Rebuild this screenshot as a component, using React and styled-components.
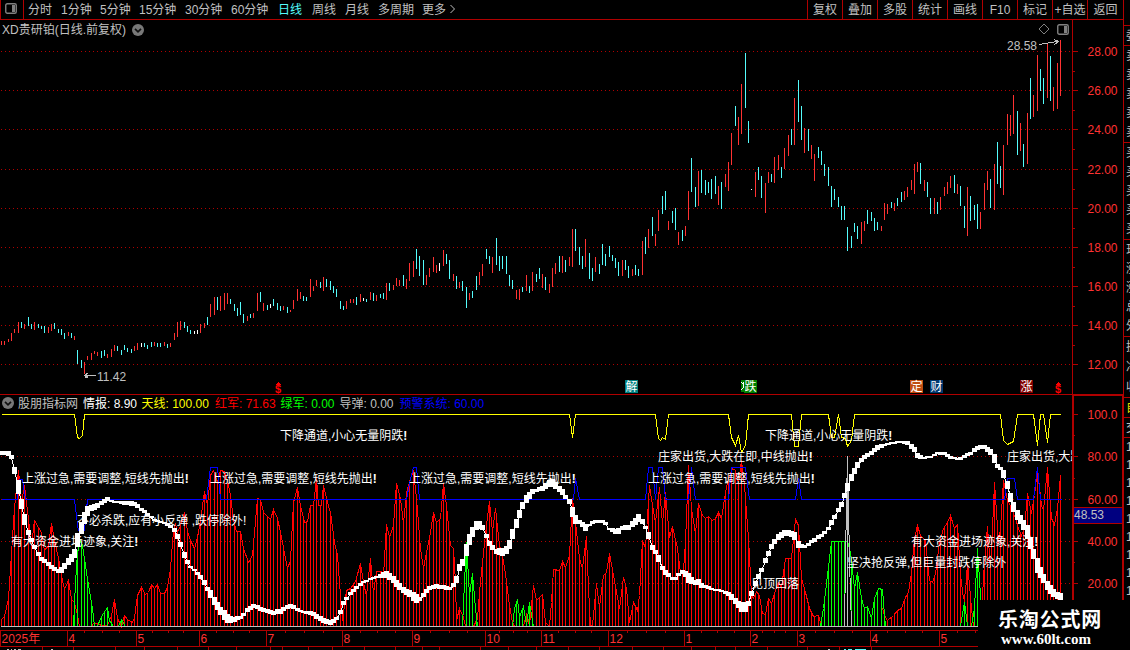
import styled, { createGlobalStyle } from "styled-components";

const RED_LINE = "#b00000";
const UP = "#ff3232";
const DOWN = "#54fcfc";
const SILVER = "#c0c0c0";
const FONT = `"Liberation Sans", "Noto Sans CJK SC", sans-serif`;

const periods = [
  { label: "分时", width: 33 },
  { label: "1分钟", width: 39 },
  { label: "5分钟", width: 39 },
  { label: "15分钟", width: 46 },
  { label: "30分钟", width: 46 },
  { label: "60分钟", width: 47 },
  { label: "日线", width: 34, active: true },
  { label: "周线", width: 33 },
  { label: "月线", width: 33 },
  { label: "多周期", width: 44 },
  { label: "更多", width: 27 },
];

const tools = ["复权", "叠加", "多股", "统计", "画线", "F10", "标记", "+自选", "返回"];

const values = [
  { label: "股朋指标网", color: SILVER, width: 65 },
  { label: "情报: 8.90", color: "#ffffff", width: 58.5 },
  { label: "天线: 100.00", color: "#ffff00", width: 73.5 },
  { label: "红军: 71.63", color: "#ff0000", width: 65.5 },
  { label: "绿军: 0.00", color: "#00ff00", width: 59 },
  { label: "导弹: 0.00", color: SILVER, width: 60 },
  { label: "预警系统: 60.00", color: "#0000ff", width: 100 },
];

// x, high, low, colour (r = up, c = down, w = flat)
const candles = `
1 341 345 r;4 341 345 r;8 339 342 r;11 333 341 r;14 329 333 r;18 322 333 r;21 322 328 c;24 324 329 r;28 317 326 c;31 324 329 c;
34 322 330 r;38 324 328 c;41 326 329 c;44 326 333 c;48 327 333 r;51 324 331 r;54 323 329 c;58 329 333 c;61 329 335 c;64 333 339 c;
68 332 336 r;71 333 338 c;74 336 340 r;77 350 364 c;81 360 368 c;84 362 374 r;87 356 360 r;91 353 360 r;94 351 354 r;97 352 356 r;
101 351 358 c;104 350 356 c;107 354 358 r;111 349 357 r;114 345 351 r;117 346 351 c;121 350 355 c;124 345 350 c;127 348 352 c;131 349 353 c;
134 346 351 r;137 343 350 r;141 343 347 w;144 343 347 c;147 345 349 c;151 342 347 c;154 342 346 r;157 343 347 c;160 343 347 c;164 342 346 r;
167 344 348 c;170 343 347 r;174 333 340 r;177 322 337 r;180 321 330 r;184 322 328 c;187 326 332 c;190 330 334 c;194 331 334 w;197 330 334 w;
200 324 333 r;204 323 328 r;207 317 325 c;210 304 317 r;214 297 315 r;217 297 310 c;220 296 311 r;224 293 310 r;227 293 304 r;230 299 304 c;
234 304 311 c;237 308 316 c;240 302 315 c;243 314 323 c;247 316 321 r;250 314 318 c;253 313 318 r;257 293 311 r;260 292 302 c;263 303 311 r;
267 305 310 c;270 304 308 w;273 299 306 c;277 303 310 c;280 306 311 c;283 306 310 r;287 307 313 c;290 310 312 r;293 300 309 r;297 289 301 r;
300 292 299 r;303 296 301 c;306 297 301 c;310 279 297 r;313 286 291 r;316 280 286 r;320 282 288 c;323 277 291 r;326 279 287 c;330 281 290 c;
333 286 293 c;336 289 297 c;340 301 309 c;343 306 310 c;346 301 309 r;350 299 303 r;353 299 303 r;356 297 305 c;360 294 302 r;363 298 301 w;
366 299 302 c;370 292 300 r;373 293 301 c;376 295 301 r;380 294 298 c;383 293 299 c;386 283 300 r;389 283 291 c;393 285 290 r;396 278 286 r;
399 280 286 r;403 275 286 c;406 279 289 r;409 263 281 r;413 261 277 r;416 249 269 c;419 256 276 c;423 260 285 c;426 275 285 r;429 268 277 r;
433 257 272 r;436 265 273 r;439 263 271 w;443 250 266 r;446 254 264 c;449 260 279 c;453 274 281 r;456 276 289 c;459 282 288 r;462 281 291 c;
466 287 308 c;469 293 300 r;472 291 298 c;476 276 290 c;479 272 285 r;482 264 276 r;486 249 259 c;489 256 264 c;492 257 273 r;496 238 265 c;
499 256 271 c;502 256 269 c;506 256 274 c;509 275 286 c;512 280 289 c;516 290 299 r;519 289 300 r;522 287 292 c;526 275 291 r;529 286 293 c;
532 272 291 r;536 274 282 c;539 268 279 c;542 274 288 r;545 277 290 c;549 284 293 r;552 268 287 r;555 263 274 r;559 256 272 c;562 256 273 r;
565 260 272 c;569 257 266 r;572 229 267 r;575 229 251 c;579 247 265 c;582 256 269 c;585 239 267 r;589 253 279 c;592 268 281 c;595 257 272 r;
599 264 274 c;602 244 265 c;605 254 266 c;609 246 257 c;612 255 261 c;615 258 268 c;618 262 276 c;622 260 276 r;625 260 270 c;628 266 278 c;
632 269 276 r;635 265 275 c;638 269 276 c;642 241 275 r;645 237 254 c;648 229 248 r;652 217 236 c;655 234 246 r;658 210 231 r;662 196 214 c;
665 191 210 c;668 221 230 r;672 211 223 c;675 208 230 c;678 232 245 r;682 230 241 c;685 226 236 r;688 191 220 r;691 158 192 c;695 187 207 c;
698 171 206 r;701 170 193 c;705 180 195 c;708 182 193 c;711 179 199 c;715 176 194 c;718 186 205 r;721 182 209 c;725 174 187 r;728 162 191 r;
731 133 165 r;735 106 126 c;738 117 145 r;741 84 134 r;745 53 108 c;748 121 143 c;751 189 190 w;755 172 197 r;758 167 180 c;761 176 198 c;
765 183 213 r;768 172 183 r;771 174 182 c;774 157 183 r;778 155 170 r;781 167 178 c;784 148 169 r;788 135 156 r;791 129 145 c;794 98 145 r;
798 80 122 c;801 106 140 c;804 128 153 r;808 129 151 c;811 145 159 r;814 154 181 r;818 147 158 c;821 151 165 c;824 164 176 c;828 167 186 c;
831 186 207 c;834 189 200 c;838 197 207 c;841 206 220 c;844 206 220 c;847 227 251 c;851 236 248 c;854 223 232 c;857 226 239 c;861 222 244 r;
864 221 231 r;867 210 224 c;871 212 221 c;874 218 231 c;877 222 230 c;881 226 231 r;884 203 220 r;887 204 214 r;891 202 208 c;894 203 211 r;
897 198 206 c;901 192 202 c;904 191 200 r;907 187 197 r;911 180 190 r;914 164 194 r;917 162 172 r;920 163 184 c;924 180 191 r;927 182 197 c;
930 198 214 c;934 198 214 r;937 202 214 c;940 197 210 r;944 187 196 r;947 182 194 r;950 176 188 r;954 175 193 c;957 184 194 r;960 186 206 c;
964 206 228 c;967 187 236 r;970 196 221 c;974 205 220 c;977 204 229 c;980 212 229 r;984 183 210 r;987 171 190 r;990 179 208 c;994 164 210 r;
997 142 184 c;1000 166 188 c;1003 145 195 r;1007 114 145 r;1010 115 136 r;1013 95 134 r;1017 111 155 c;1020 123 151 r;1023 144 167 c;1027 113 164 r;
1030 78 119 c;1033 95 117 r;1037 55 111 r;1040 69 91 c;1043 78 104 c;1047 43 98 r;1050 56 101 c;1053 87 111 r;1057 63 109 r;1060 40 96 r`
  .split(";")
  .map((row) => {
    const [x, high, low, tone] = row.trim().split(" ");
    return { x: +x, high: +high, low: +low, tone };
  });

const toneColors = { r: UP, c: DOWN, w: "#ffffff" };

const parse = (text) => text.trim().split(/\s+/).map((pair) => pair.split(",").map(Number));

const redArmy = [
  `1,619 4,616 8,598 11,553 14,507 18,470 21,503 24,485 28,519 31,545 34,520 38,527 41,532 44,550 48,545 51,523 54,540 58,558 61,575 64,589 68,580 71,599 74,602 77,615 79,626`,
  `91,626 93,623 97,623 101,625 107,625 111,615 114,599 117,618 121,626 124,615 127,619 132,622 134,617 137,595 141,587 145,594 148,592 151,584 154,588 157,584 160,593 164,593 167,587 170,568 173,530 175,523 177,532 180,525 184,512 187,531 190,540 194,548 197,537 200,520 204,491 207,505 210,475 213,470 217,482 220,470 224,471 227,480 230,495 233,520 236,531 240,531 243,548 248,562 252,555 257,498 260,499 263,512 270,519 273,509 277,518 280,532 287,568 290,560 293,502 297,487 300,505 304,522 307,521 310,505 313,505 316,478 318,505 321,505 323,485 327,502 330,512 334,542 337,555 340,595 342,620 346,590 350,588 355,581 360,563 364,587 366,595 370,558 373,593 376,571 381,571 383,575 386,524 389,537 393,525 396,483 400,498 403,523 406,492 410,478 413,470 416,498 420,548 423,568 426,552 430,532 433,512 436,522 440,518 443,483 446,505 450,545 453,548 455,582 456,620 459,608 463,617 465,626`,
  `473,626 477,618 479,592 482,562 486,525 489,501 492,532 495,508 499,545 502,555 505,573 508,598 512,622 514,626`,
  `523,626 526,613 529,625 533,585 536,600 542,594 545,622 549,626 551,602 553,569 559,570 562,561 565,567 569,555 572,498 575,522 579,558 582,568 586,536 588,588 590,625 592,625 596,583 599,607 603,575 606,572 609,553 613,575 619,608 623,577 626,588 629,622 633,602 637,610 639,595 642,540 645,548 649,485 652,505 655,522 659,487 662,523 665,492 669,537 672,526 677,548 680,572 683,570 685,542 688,465 691,508 695,533 698,503 702,515 705,518 708,516 712,520 715,518 718,512 721,518 725,492 728,478 732,468 735,470 738,483 741,460 744,485 748,538 751,595 753,598 756,591 759,595 762,613 765,614 768,598 771,603 775,590 778,582 781,587 785,558 791,558 795,519 798,525 801,578 805,592 809,608 813,616 818,615 821,626`,
  `882,608 884,615 887,620 893,615 897,610 901,608 905,597 908,592 911,572 914,538 917,525 920,535 925,540 929,580 932,582 935,573 939,542 943,528 947,522 950,515 954,528 957,524 960,575 963,598 965,592 967,562 971,608 973,626`,
  `980,626 982,595 984,562 987,526 990,568 992,528 994,482 998,542 1000,528 1003,480 1007,500 1010,505 1015,518 1018,528 1021,535 1024,528 1027,493 1031,513 1034,495 1037,468 1041,505 1043,510 1047,467 1051,518 1054,524 1057,508 1060,475`,
].map(parse);

const greenArmy = [
  `73,626 75,582 77,552 80,540 82,545 85,565 88,585 92,608 94,626`,
  `97,626 100,618 103,613 107,607 109,621 111,622 112,626`,
  `118,626 121,619 125,626`,
  `462,626 464,582 466,542 469,595 472,573 475,608 477,626`,
  `512,626 514,608 517,599 519,617 523,606 526,625 529,602 533,626`,
  `820,626 823,608 827,575 831,541 847,541 850,552 854,588 857,572 861,598 864,608 867,606 871,618 874,598 878,588 882,589 884,615 885,626`,
  `960,626 964,602 967,625`,
  `971,626 974,608 977,548 980,595 981,626`,
].map(parse);

const warning = parse(`1,499 17,499 19,479 22,479 25,499 74,499 77,524 78,530 84,530 87,499 206,499 210,467 217,467 220,499 406,499 410,478 413,467 416,467 419,499 573,499 575,478 579,499 645,499 648,467 652,467 655,499 658,467 662,467 665,499 688,499 691,467 695,499 728,499 731,467 745,467 749,499 795,499 798,478 801,499 1004,499 1007,478 1014,478 1017,499 1033,499 1037,467 1040,499 1061,499`);

const sky = parse(`1,414 74,414 77,437 79,438 82,435 84,414 569,414 572,437 575,414 655,414 658,438 660,440 662,437 665,439 668,414 728,414 731,437 735,445 738,435 741,452 745,445 748,414 791,414 794,446 798,446 801,414 828,414 831,437 834,437 838,414 841,437 845,438 847,446 851,440 854,414 1000,414 1003,440 1007,444 1013,441 1017,414 1033,414 1037,445 1040,414 1043,414 1047,442 1050,414 1060,414`);

// x, centre, thickness of the sentiment ribbon
const ribbon = parse(`
1,452.5,4 8,453,5 11,457,4 14,470,7 18,487,14 21,504,10 24,519,11 28,532,5 31,540,4 34,547,4 38,554,4 41,559,4 44,561,4 48,564,4 51,567,4 54,569,4 58,571,4
61,570,6 64,566,6 68,561,7 71,558,8 74,553,9 77,540,14 81,528,12 84,518,12 87,511,10 91,508,6 97,505,5 101,503,4 107,499,4 111,501,2 117,502,2 124,503,4
131,503,5 136,505,4 141,509,3 147,514,3 154,520,2 164,523,2 170,526,3 174,530,4 177,536,5 180,544,5 184,555,6 187,562,4 190,567,2 194,570,2 200,577,4
204,582,5 207,589,4 210,594,8 214,601,8 217,606,8 220,611,8 224,615,10 228,619,8 234,619,5 240,617,3 247,610,4 254,605,4 260,609,4 273,612.7,4 280,611,5
285,608,4 291,605.5,4 295,608,3 303,612,2 311,613,4 317,617,5 323,620,5 329,622.7,5 335,620,3 340,612,4 343,603,4 347,597,3 355,588,3 365,581,2 375,577,2
386,574,7 392,578,7 398,586,7 403,590,6 408,593,6 415,598,10 420,599,3 423,595,4 428,588,4 435,586,4 442,587,4 450,589,3 454,584,4 457,577,8 459,567,7
463,561,7 466,550,12 469,539,11 473,530,10 477,524,8 481,526,7 484,531,2 487,539,5 491,547,5 496,551,5 502,552,8 507,550,8 510,541,9 513,530,10 517,521,9
520,510,8 523,503,7 527,498,8 531,492,5 537,490,3 543,488,5 547,484,7 553,483,8 558,488,6 562,492,6 566,498,3 570,503,5 572,512,10 575,519,9 580,523,3
586,528,8 588,526,2 593,522,3 600,521,3 605,523,3 608,528,2 613,531,4 617,532,6 622,528,4 628,527,5 633,523,6 638,518,8 642,521,5 645,527,3 649,538,8
652,547,5 655,552,4 659,560,8 662,568,4 666,574,5 672,578,3 677,578,3 678,574,3 683,572,4 688,578,10 693,582,5 698,582,6 702,586,4 712,589,2 722,591,2
728,594,4 732,598,6 737,603,6 740,606,10 744,608,11 748,603,5 751,593,5 755,583,5 758,576,5 762,568,3 766,558,5 769,551,5 772,544,5 776,538,5 780,536,6
785,532,6 790,533,6 795,537,8 798,544,7 802,547,3 808,544,3 815,539,4 822,535,3 828,528,3 831,522,5 835,515,4 838,510,4 842,502,5 844,495,5 847,487,8
851,477,7 854,471,6 857,465,6 861,460,4 865,456,4 872,452,4 878,447,5 885,445,2 892,443,2 900,442,2 907,443,4 913,448,5 917,455,5 923,458,2 930,457,2
937,453,2 943,453,3 950,457,3 957,459,2 963,457,3 970,453,3 977,448,4 982,446,4 987,449,5 992,454,6 994,458,9 997,466,4 1000,468,3 1003,474,8 1007,485,8
1010,497,9 1013,507,10 1017,515,10 1022,523,9 1027,532,14 1030,543,12 1033,554,10 1037,565,15 1041,575,9 1045,582,8 1048,587,9 1053,593,8 1060,596.5,7`);

const signals = [
  { x: 280, y: 435, text: "下降通道,小心无量阴跌", mark: true },
  { x: 765, y: 435, text: "下降通道,小心无量阴跌", mark: true },
  { x: 658, y: 456, text: "庄家出货,大跌在即,中线抛出", mark: true },
  { x: 1007, y: 456, text: "庄家出货,大跌" },
  { x: 22, y: 478, text: "上涨过急,需要调整,短线先抛出", mark: true },
  { x: 210, y: 478, text: "上涨过急,需要调整,短线先抛出", mark: true },
  { x: 409, y: 478, text: "上涨过急,需要调整,短线先抛出", mark: true },
  { x: 648, y: 478, text: "上涨过急,需要调整,短线先抛出", mark: true },
  { x: 77, y: 520, text: "不必杀跌,应有小反弹 ,跌停除外!" },
  { x: 11, y: 541, text: "有大资金进场迹象,关注", mark: true },
  { x: 911, y: 541, text: "有大资金进场迹象,关注", mark: true },
  { x: 847, y: 562, text: "坚决抢反弹,但巨量封跌停除外" },
  { x: 751, y: 583, text: "见顶回落" },
];

const badges = [
  { x: 625, text: "解", color: "#008080" },
  { x: 744, text: "跌", color: "#008000" },
  { x: 910, text: "定", color: "#c04c10" },
  { x: 930, text: "财", color: "#003870" },
  { x: 1020, text: "涨", color: "#800000" },
];

const months = [
  [0, "2025年"], [67, "4"], [136, "5"], [199, "6"], [266, "7"], [342, "8"], [412, "9"], [485, "10"],
  [541, "11"], [608, "12"], [684, "1"], [750, "2"], [797, "3"], [870, "4"], [939, "5"], [1010, ""],
];

const lowerTicks = [42, 73, 115, 144, 177, 208, 236, 270, 282, 308, 332, 364, 395, 422, 439, 480, 508, 536, 568, 599, 632, 663, 691, 715, 735, 767, 807, 839, 871];

const priceLevels = [[51, "28.00"], [90, "26.00"], [129, "24.00"], [169, "22.00"], [208, "20.00"], [247, "18.00"], [286, "16.00"], [325, "14.00"], [364, "12.00"]];
const valueLevels = [[414, "100.0"], [456, "80.00"], [499, "60.00"], [541, "40.00"], [583, "20.00"]];

const quoteGroups = [
  { height: 26, rows: [] },
  { height: 20, rows: ["委比"] },
  { height: 97, rows: ["卖五", "卖四", "卖三", "卖二", "卖一"] },
  { height: 97, rows: ["买一", "买二", "买三", "买四", "买五"] },
  { height: 97, rows: ["现价", "涨跌", "涨幅", "总量", "外盘"] },
  { height: 61, rows: ["换手", "净资", "收益"] },
  { height: 20, rows: ["自选"], color: "#e0e000" },
  { height: 20, rows: ["交易"] },
  { height: 163, rows: ["14:56", "14:56", "14:56", "14:56", "14:56", "14:56", "14:56", "14:57", "15:00"] },
];

const interpolate = (points, x, column = 1) => {
  for (let i = 1; i < points.length; i++) {
    if (x <= points[i][0]) {
      const a = points[i - 1];
      const b = points[i];
      return a[column] + ((b[column] - a[column]) * (x - a[0])) / (b[0] - a[0]);
    }
  }
  return points[points.length - 1][column];
};

const toPath = (points) => "M" + points.map(([x, y]) => `${x + 0.5} ${y + 0.5}`).join("L");

const stems = (points) =>
  candles
    .filter(({ x }) => x >= points[0][0] && x <= points[points.length - 1][0])
    .map(({ x }) => `M${x + 0.5} ${Math.round(interpolate(points, x))}V626`)
    .join("");

function PanelIcon() {
  return (
    <svg width="12" height="11" viewBox="0 0 12 11">
      <rect x="0.75" y="0.75" width="10.5" height="9.5" rx="1.5" fill="none" stroke="#808080" strokeWidth="1.4" />
      <rect x="7" y="2" width="3" height="7" fill="#808080" />
    </svg>
  );
}

function CollapseIcon() {
  return (
    <svg width="12" height="12" viewBox="0 0 12 12">
      <circle cx="6" cy="6" r="6" fill="#787878" />
      <path d="M3 4.8l3 3 3-3" fill="none" stroke="#101010" strokeWidth="1.7" />
    </svg>
  );
}

function Grid({ levels }) {
  return levels.map(([y]) => (
    <path key={y} d={`M1 ${y + 0.5}H1072`} stroke={RED_LINE} strokeDasharray="1 3" />
  ));
}

function DollarMark({ x }) {
  return (
    <g>
      <path d={`M${x} 384.5l2.5-2.5 2.5 2.5z`} fill="#ff0000" />
      <DollarText x={x - 1} y={393}>$</DollarText>
    </g>
  );
}

function PriceChart() {
  return (
    <ChartSvg width="1072" height="374" viewBox="0 20 1072 374">
      <Grid levels={priceLevels} />
      {["r", "c", "w"].map((tone) => (
        <path
          key={tone}
          stroke={toneColors[tone]}
          d={candles
            .filter((candle) => candle.tone === tone)
            .map(({ x, high, low }) => `M${x + 0.5} ${high}V${low}`)
            .join("")}
        />
      ))}
      <path d="M84.5 375.5H96M84.5 375.5l4-3M84.5 375.5l4 3M85 375h2v2h-2z" stroke={SILVER} fill="none" />
      <ChartText x="97" y="381" $color={SILVER}>11.42</ChartText>
      <path d="M1039.5 44.5l20-3.5M1059 41.5l-5-2M1059 41.5l-5 3" stroke={SILVER} fill="none" />
      <ChartText x="1007" y="50" $color={SILVER}>28.58</ChartText>
      {badges.map(({ x, text, color }) => (
        <g key={text}>
          <path d={`M${x} 380h12l1 1v12h-13z`} fill={color} />
          <ChartText x={x + 0.5} y="391" $color="#ffffff">{text}</ChartText>
        </g>
      ))}
      <path d="M741 380h4v12h-4z" fill="#008000" />
      <path d="M741.5 382l2 3M743.5 382v5l-2 3" stroke="#ffffff" fill="none" />
      <DollarMark x={276} />
      <DollarMark x={1056} />
    </ChartSvg>
  );
}

function IndicatorChart() {
  return (
    <ChartSvg width="1072" height="218" viewBox="0 412 1072 218">
      <Grid levels={valueLevels.slice(1)} />
      <g fill="none">
        {redArmy.map((points, i) => (
          <path key={i} d={toPath(points) + stems(points)} stroke="#ff0000" />
        ))}
        {greenArmy.map((points, i) => (
          <path key={i} d={toPath(points) + stems(points)} stroke="#00ff00" />
        ))}
        <path d={toPath(warning)} stroke="#0000ff" />
        <path d="M844.5 626L846.5 500 847.5 456V626M847.5 456L849.5 560 851.5 626" stroke={SILVER} />
        <path d={toPath(sky)} stroke="#ffff00" />
        <path d={toPath(ribbon)} stroke="#ffffff" />
      </g>
      {signals.map(({ x, y, text, mark }) => (
        <ChartText key={`${x}-${y}`} x={x} y={y + 5} $color="#ffffff">
          {text}
          {mark && <tspan fontWeight="bold">!</tspan>}
        </ChartText>
      ))}
      {candles.map(({ x }) => {
        const height = Math.round(interpolate(ribbon, x, 2));
        return (
          <rect
            key={x}
            x={x - 2}
            y={Math.round(interpolate(ribbon, x) - height / 2)}
            width="5"
            height={height}
            fill="#ffffff"
          />
        );
      })}
      <path d="M1 626.5H1072" stroke={SILVER} />
    </ChartSvg>
  );
}

function Axis({ levels, top, height, thick, marker }) {
  const ticks = levels.slice(0, -1).map(([y], i) => Math.round((y + levels[i + 1][0]) / 2));
  return (
    <ChartSvg width="52" height={height} viewBox={`1072 ${top} 52 ${height}`}>
      <path d={`M${thick ? 1073 : 1072.5} ${top}V${top + height}`} stroke={RED_LINE} strokeWidth={thick ? 2 : 1} />
      {levels.map(([y, label]) => (
        <g key={label}>
          <path d={`M1073 ${y + 0.5}h5`} stroke={RED_LINE} />
          <ChartText x="1087.5" y={y + 5} $color={UP}>{label}</ChartText>
        </g>
      ))}
      {ticks.map((y) => <path key={y} d={`M1073 ${y + 0.5}h2`} stroke={RED_LINE} />)}
      {marker && (
        <g>
          <rect x="1074" y="507" width="48" height="17" fill="#000080" />
          <path d="M1074 507.5H1122M1074 523.5H1122" stroke={RED_LINE} />
          <ChartText x="1074" y="519" $color={SILVER}>{marker}</ChartText>
        </g>
      )}
      <path d={`M${thick ? 1123 : 1123.5} ${top}V${top + height}`} stroke={RED_LINE} strokeWidth={thick ? 2 : 1} />
      {thick && <path d={`M1072 ${top + 1}H1124`} stroke={RED_LINE} strokeWidth="2" />}
    </ChartSvg>
  );
}

function TimeAxis() {
  const minor = months.slice(0, -1).flatMap(([x], i) => {
    const step = (months[i + 1][0] - x) / 4;
    return i === 0 ? [] : [1, 2, 3].map((n) => Math.round(x + step * n));
  });
  return (
    <ChartSvg width="1124" height="20" viewBox="0 630 1124 20">
      <path
        stroke={RED_LINE}
        d={
          "M0 630.5H1124M0 646.5H1124" +
          months.map(([x]) => `M${x + 0.5} 630V646`).join("") +
          minor.map((x) => `M${x + 0.5} 630v3`).join("") +
          lowerTicks.map((x) => `M${x + 0.5} 646v4`).join("")
        }
      />
      {months.map(([x, label]) => (
        <ChartText key={x} x={x + 1.5} y="643" $color={UP}>{label}</ChartText>
      ))}
      <path d="M7 649.5h2m2 0h1m2 0h2m2 0h3M51 649.5h2M828 649.5h2" stroke={SILVER} />
      <path d="M844 649.5h2m2 0h4m3 0h11" stroke={DOWN} strokeWidth="2" />
    </ChartSvg>
  );
}

export default function App() {
  return (
    <>
      <GlobalStyle />
      <Terminal>
        <Main>
          <Toolbar>
            <IconCell><PanelIcon /></IconCell>
            <Periods>
              {periods.map(({ label, width, active }) => (
                <Period key={label} $width={width} $active={active}>{label}</Period>
              ))}
              <MoreArrow width="8" height="10" viewBox="0 0 8 10">
                <path d="M1.5 1l4 4-4 4" fill="none" stroke={SILVER} />
              </MoreArrow>
            </Periods>
            {tools.map((tool) => <Tool key={tool}>{tool}</Tool>)}
          </Toolbar>
          <PricePanel>
            <PriceChart />
            <Axis levels={priceLevels} top={20} height={374} />
            <StockTitle>
              XD贵研铂(日线.前复权)
              <CollapseIcon />
            </StockTitle>
            <ChartTools>
              <svg width="12" height="12" viewBox="0 0 12 12">
                <path d="M6 1l5 5-5 5-5-5z" fill="none" stroke="#808080" />
              </svg>
              <PanelIcon />
            </ChartTools>
          </PricePanel>
          <IndicatorPanel>
            <Plot>
              <ValueBar>
                <CollapseIcon />
                {values.map(({ label, color, width }) => (
                  <Value key={label} $color={color} $width={width}>{label}</Value>
                ))}
              </ValueBar>
              <IndicatorChart />
            </Plot>
            <Axis levels={valueLevels} top={394} height={236} thick marker="48.53" />
          </IndicatorPanel>
          <TimeAxis />
        </Main>
        <Quotes>
          {quoteGroups.map(({ height, rows, color }, i) => (
            <QuoteGroup key={i} $height={height} $color={color}>
              {rows.map((row, n) => <Quote key={n}>{row}</Quote>)}
            </QuoteGroup>
          ))}
        </Quotes>
        <SiteMark>
          <SiteName>乐淘公式网</SiteName>
          <SiteUrl>www.60lt.com</SiteUrl>
        </SiteMark>
      </Terminal>
    </>
  );
}

const GlobalStyle = createGlobalStyle`
  body {
    margin: 0;
    background: #000000;
    overflow: hidden;
  }
`;

const Terminal = styled.div`
  position: relative;
  display: flex;
  width: 1130px;
  height: 650px;
  overflow: hidden;
  background: #000000;
  color: ${SILVER};
  font-family: ${FONT};
  font-size: 12px;
`;

const Main = styled.div`
  display: flex;
  flex-direction: column;
  width: 1124px;
  flex: none;
`;

const Toolbar = styled.div`
  box-sizing: border-box;
  display: flex;
  height: 20px;
  border-bottom: 1px solid ${RED_LINE};
  border-right: 1px solid ${RED_LINE};
  line-height: 18px;
  white-space: nowrap;
`;

const IconCell = styled.div`
  box-sizing: border-box;
  width: 24px;
  padding: 3px 0 0 4px;
  border: solid ${RED_LINE};
  border-width: 0 1px;
  line-height: 0;
`;

const Periods = styled.div`
  display: flex;
  align-items: flex-start;
  flex: 1;
  padding: 1px 0 0 4px;
`;

const Period = styled.div`
  width: ${({ $width }) => $width}px;
  color: ${({ $active }) => ($active ? DOWN : SILVER)};
`;

const MoreArrow = styled.svg`
  margin-top: 3px;
`;

const Tool = styled.div`
  box-sizing: border-box;
  width: 35px;
  border-left: 1px solid ${RED_LINE};
  padding-top: 1px;
  text-align: center;

  &:last-child {
    width: 36px;
  }
`;

const ChartSvg = styled.svg`
  display: block;
  flex: none;
  shape-rendering: crispEdges;
`;

const ChartText = styled.text`
  fill: ${({ $color }) => $color};
  font-family: ${FONT};
  font-size: 12px;
  white-space: pre;
`;

const DollarText = styled.text`
  fill: #ff0000;
  font-family: ${FONT};
  font-size: 11px;
  font-weight: bold;
`;

const PricePanel = styled.div`
  position: relative;
  display: flex;
  height: 374px;
`;

const StockTitle = styled.div`
  position: absolute;
  top: 2px;
  left: 2px;
  display: flex;
  align-items: center;
  gap: 6px;
  line-height: 17px;

  svg {
    margin-bottom: 2px;
  }
`;

const ChartTools = styled.div`
  position: absolute;
  top: 3px;
  right: 55px;
  display: flex;
  align-items: center;
  gap: 7px;
`;

const IndicatorPanel = styled.div`
  display: flex;
  height: 236px;
`;

const Plot = styled.div`
  width: 1072px;
`;

const ValueBar = styled.div`
  box-sizing: border-box;
  display: flex;
  align-items: flex-start;
  height: 18px;
  padding: 1px 0 0 2px;
  border-top: 1px solid ${RED_LINE};
  line-height: 16px;
  white-space: nowrap;

  svg {
    margin: 1px 4px 0 0;
  }
`;

const Value = styled.div`
  width: ${({ $width }) => $width}px;
  color: ${({ $color }) => $color};
`;

const Quotes = styled.div`
  width: 6px;
  overflow: hidden;
`;

const QuoteGroup = styled.div`
  box-sizing: border-box;
  display: flex;
  flex-direction: column;
  justify-content: space-around;
  height: ${({ $height }) => $height}px;
  padding-left: 2px;
  border-bottom: 1px solid ${RED_LINE};
  color: ${({ $color }) => $color || SILVER};
`;

const Quote = styled.div`
  line-height: 16px;
  white-space: nowrap;
`;

const SiteMark = styled.div`
  position: absolute;
  right: 0;
  bottom: 0;
  box-sizing: border-box;
  width: 152px;
  height: 50px;
  padding: 8px 0 0 20px;
  background: #000000;
  color: #ffffff;
  white-space: nowrap;
`;

const SiteName = styled.div`
  font-family: "Noto Sans CJK SC", sans-serif;
  font-size: 20px;
  font-weight: bold;
  letter-spacing: 0.8px;
  line-height: 22px;
`;

const SiteUrl = styled.div`
  padding-left: 3px;
  font-family: "Liberation Serif", serif;
  font-size: 15px;
  font-weight: bold;
  line-height: 18px;
`;
